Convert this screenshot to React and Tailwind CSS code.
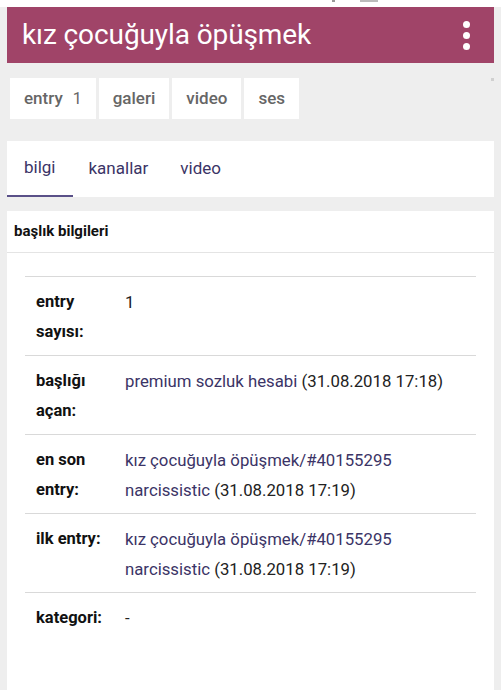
export default function App() {
  const rows = [
    { label: "entry sayısı:", value: [<span key="a" className="text-[#222]">1</span>] },
    {
      label: "başlığı açan:",
      value: [
        <span key="a">
          <span className="text-[#3b3466]">premium sozluk hesabi</span>{" "}
          <span className="text-[#222]">(31.08.2018 17:18)</span>
        </span>,
      ],
    },
    {
      label: "en son entry:",
      value: [
        <span key="a" className="block text-[#3b3466]">kız çocuğuyla öpüşmek/#40155295</span>,
        <span key="b" className="block">
          <span className="text-[#3b3466]">narcissistic</span>{" "}
          <span className="text-[#222]">(31.08.2018 17:19)</span>
        </span>,
      ],
    },
    {
      label: "ilk entry:",
      value: [
        <span key="a" className="block text-[#3b3466]">kız çocuğuyla öpüşmek/#40155295</span>,
        <span key="b" className="block">
          <span className="text-[#3b3466]">narcissistic</span>{" "}
          <span className="text-[#222]">(31.08.2018 17:19)</span>
        </span>,
      ],
    },
    { label: "kategori:", value: [<span key="a" className="text-[#222]">-</span>] },
  ];

  return (
    <div className="h-[690px] w-[501px] overflow-hidden bg-[#eeeeee] font-['Roboto',sans-serif]">
      <div className="relative h-[7px] bg-white">
        <span className="absolute left-[332px] top-0 h-[2px] w-[3px] bg-[#999]" />
        <span className="absolute left-[360px] top-0 h-[2px] w-[18px] bg-[#bbb]" />
      </div>

      <div className="mx-[7px] flex h-[56px] items-center justify-between bg-[#a04468] pl-[15px] pr-[24px]">
        <h1 className="text-[28px] leading-none font-normal tracking-[-0.1px] text-white">kız çocuğuyla öpüşmek</h1>
        <div className="flex flex-col gap-[4px]">
          <span className="h-[7px] w-[7px] rounded-full bg-white" />
          <span className="h-[7px] w-[7px] rounded-full bg-white" />
          <span className="h-[7px] w-[7px] rounded-full bg-white" />
        </div>
      </div>

      <div className="relative mt-[15px] flex gap-[3px] pl-[10px]">
        {[
          ["entry", "1"],
          ["galeri"],
          ["video"],
          ["ses"],
        ].map(([t, n]) => (
          <div
            key={t}
            className="flex h-[41px] items-center bg-white px-[14px] text-[17px] font-medium text-[#666]"
          >
            {t}
            {n ? <span className="ml-[10px] text-[16px] font-normal">{n}</span> : null}
          </div>
        ))}
        <span className="absolute right-[7px] top-[0px] h-[3px] w-[3px] bg-[#d0d0d0]" />
      </div>

      <div className="mx-[7px] mt-[22px] flex h-[56px] bg-white">
        {["bilgi", "kanallar", "video"].map((t, i) => (
          <div
            key={t}
            className={`flex items-center text-[17px] text-[#3b3466] ${i === 0 ? "border-b-2 border-[#5a5088] px-[17px]" : "px-[16px]"}`}
          >
            {t}
          </div>
        ))}
      </div>

      <div className="mx-[7px] mt-[14px] flex h-[42px] items-center border-b border-[#e4e4e4] bg-white px-[7px] text-[15px] font-bold text-[#111]">
        başlık bilgileri
      </div>

      <div className="mx-[7px] h-[500px] bg-white px-[18px] pt-[23px]">
        <div className="border-t border-[#d9d9d9]">
          {rows.map((r, i) => (
            <div
              key={r.label}
              className={`flex pt-[10px] pb-[8px] leading-[30px] ${i < rows.length - 1 ? "border-b border-[#d9d9d9]" : ""}`}
            >
              <div className="w-[100px] shrink-0 pl-[11px] pr-[12px] text-[16.5px] font-bold text-[#111]">{r.label}</div>
              <div className="flex-1 text-[16.75px]">{r.value}</div>
            </div>
          ))}
        </div>
      </div>
    </div>
  );
}
